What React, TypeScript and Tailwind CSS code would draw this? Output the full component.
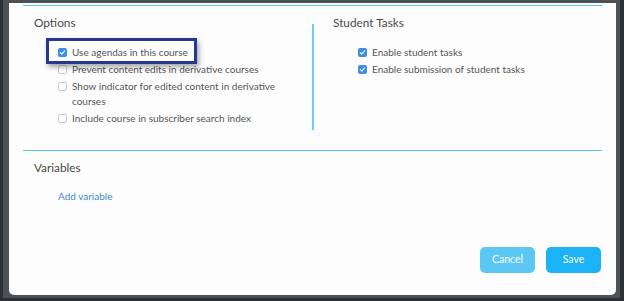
import React from 'react';

const font = { fontFamily: 'Lato, "Open Sans", Arial, sans-serif' };

function Box({ checked }: { checked?: boolean }) {
  if (checked) {
    return (
      <span className="mt-[3px] flex h-[9px] w-[9px] shrink-0 items-center justify-center rounded-[2px] bg-[#3d8ee4]">
        <svg width="7" height="7" viewBox="0 0 8 8" fill="none">
          <path d="M1.5 4.2 3.2 5.8 6.5 2" stroke="white" strokeWidth="1.2" strokeLinecap="round" strokeLinejoin="round" />
        </svg>
      </span>
    );
  }
  return <span className="mt-[3px] h-[9px] w-[9px] shrink-0 rounded-[2px] border border-[#c9c9c9] bg-white" />;
}

function Option({ label, checked }: { label: string; checked?: boolean }) {
  return (
    <label className="flex items-start gap-[5px] text-[10px] leading-[15px] text-[#555]">
      <Box checked={checked} />
      <span>{label}</span>
    </label>
  );
}

export default function App() {
  return (
    <div className="relative h-[301px] w-[624px] overflow-hidden bg-[#2c2f34]" style={font}>
      <div className="ml-[3px] h-[298px] w-[617px] bg-[#4c5156] pb-[3px] pl-[6px] pr-[4px] pt-[3px]">
        <div className="flex h-full flex-col rounded-b-[5px] bg-[#fdfdfd] px-[14px] pt-[2px] pb-[22px]">
          <div className="h-px bg-[#5cc6f7]" />

          <div className="flex h-[144px]">
            <div className="w-[289px] pl-[11px] pt-[9px]">
              <h2 className="text-[11.8px] leading-[16px] text-[#4a4a4a]">Options</h2>
              <div className="mt-[14px] flex w-[250px] flex-col gap-[2px] pl-[24px]">
                <Option label="Use agendas in this course" checked />
                <Option label="Prevent content edits in derivative courses" />
                <Option label="Show indicator for edited content in derivative courses" />
                <Option label="Include course in subscriber search index" />
              </div>
            </div>
            <div className="mt-[18px] h-[106px] w-[2px] bg-[#6ccbf7]" />
            <div className="flex-1 pl-[19px] pt-[9px]">
              <h2 className="text-[11.8px] leading-[16px] text-[#4a4a4a]">Student Tasks</h2>
              <div className="mt-[14px] flex flex-col gap-[2px] pl-[25px]">
                <Option label="Enable student tasks" checked />
                <Option label="Enable submission of student tasks" checked />
              </div>
            </div>
          </div>

          <div className="h-px bg-[#5cc6f7]" />

          <div className="pl-[11px] pt-[9px]">
            <h2 className="text-[11.8px] leading-[16px] text-[#4a4a4a]">Variables</h2>
            <button className="mt-[13px] ml-[24px] text-[10px] leading-[15px] text-[#3f88cf]">Add variable</button>
          </div>

          <div className="mt-auto flex justify-end gap-[11px] pr-[1px]">
            <button className="h-[26px] w-[55px] rounded-[5px] bg-[#5bc7f5] text-[10.5px] text-white">Cancel</button>
            <button className="h-[26px] w-[55px] rounded-[5px] bg-[#1bb3f5] text-[10.5px] text-white">Save</button>
          </div>
        </div>
      </div>

      <div className="absolute left-[46px] top-[38px] h-[26px] w-[151px] border-[3px] border-[#26398c] shadow-[2px_3px_5px_rgba(0,0,0,0.35)]" />
    </div>
  );
}
